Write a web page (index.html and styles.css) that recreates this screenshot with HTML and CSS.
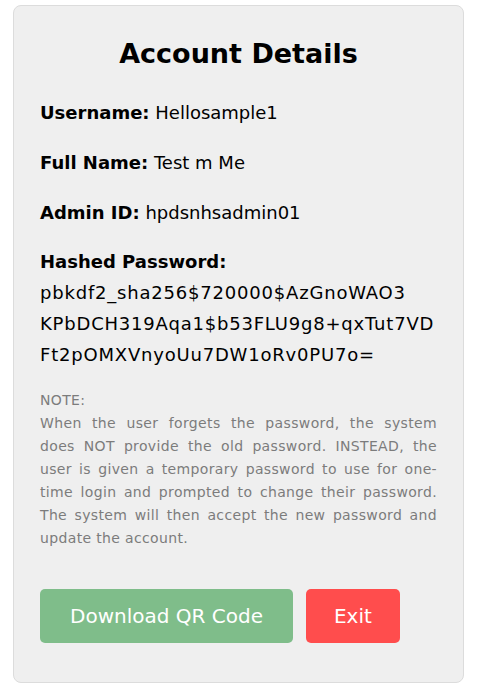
FILE: index.html
```html
<!DOCTYPE html>
<html lang="en">
<head>
<meta charset="utf-8">
<title>Account Details</title>
<link rel="stylesheet" href="styles.css">
</head>
<body>
<main class="card">
  <h2 class="title">Account Details</h2>
  <p class="field"><strong>Username:</strong> Hellosample1</p>
  <p class="field"><strong>Full Name:</strong> Test m Me</p>
  <p class="field"><strong>Admin ID:</strong> hpdsnhsadmin01</p>
  <div class="field hashed">
    <strong class="hash-label">Hashed Password:</strong>
    <span class="hash-line">pbkdf2_sha256$720000$AzGnoWAO3</span>
    <span class="hash-line">KPbDCH319Aqa1$b53FLU9g8+qxTut7VD</span>
    <span class="hash-line">Ft2pOMXVnyoUu7DW1oRv0PU7o=</span>
  </div>
  <p class="note">NOTE:<br>When the user forgets the password, the system does NOT provide the old password. INSTEAD, the user is given a temporary password to use for one-time login and prompted to change their password. The system will then accept the new password and update the account.</p>
  <div class="actions">
    <button class="btn btn-green" type="button">Download QR Code</button>
    <button class="btn btn-red" type="button">Exit</button>
  </div>
</main>
</body>
</html>
```

FILE: styles.css
```css
* { box-sizing: border-box; }
html, body { margin: 0; padding: 0; background: #ffffff; }
body {
  font-family: "DejaVu Sans", "Open Sans", sans-serif;
  color: #000;
  padding: 5px 13px 9px 13px;
}
.card {
  width: 451px;
  background: #efefef;
  border: 1px solid #dcdcdc;
  border-radius: 8px;
  padding: 16px 26px 39px 26px;
}
.title {
  margin: 10px 0 21px 0;
  text-align: center;
  font-size: 27px;
  font-weight: 700;
  line-height: 44px;
}
.field {
  margin: 0 0 19px 0;
  font-size: 18px;
  line-height: 31px;
}
.field strong { font-weight: 700; }
.hashed { display: flex; flex-direction: column; }
.hash-label { line-height: 30px; }
.hash-line { display: block; letter-spacing: 0.8px; }
.note {
  margin: 0;
  font-size: 14px;
  line-height: 23px;
  letter-spacing: 0.35px;
  color: #7c7c7c;
  text-align: justify;
}
.actions {
  display: flex;
  gap: 13px;
  margin-top: 39px;
}
.btn {
  font-family: inherit;
  font-size: 20px;
  font-weight: 500;
  color: #fff;
  border: none;
  border-radius: 5px;
  height: 54px;
  padding: 0 30px;
}
.btn-red { padding: 0 28px; }
.btn-green { background: #7fbd8a; }
.btn-red { background: #ff4d4d; }
```
